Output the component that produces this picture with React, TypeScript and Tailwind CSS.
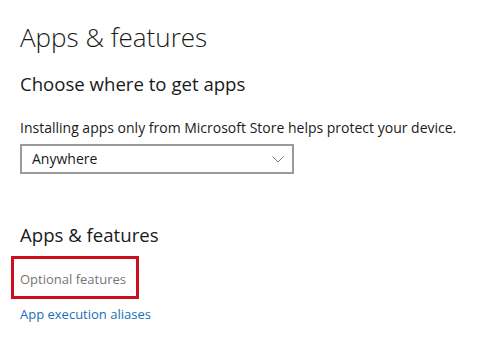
import { useState } from "react";

export default function App() {
  const [choice] = useState("Anywhere");

  return (
    <div className="w-[500px] h-[344px] bg-white pl-[20px] pt-[21px] text-[#1a1a1a] font-['Open_Sans',sans-serif] overflow-hidden">
      <h1 className="text-[26px] leading-[32px] font-light">Apps &amp; features</h1>

      <h2 className="mt-[17px] text-[18.6px] leading-[28px] font-normal">Choose where to get apps</h2>

      <p className="mt-[20px] text-[14px] leading-[20px]">
        Installing apps only from Microsoft Store helps protect your device.
      </p>

      <div className="mt-[6px] w-[274px] h-[30px] border-2 border-[#9a9a9a] flex items-center justify-between pl-[10px] pr-[8px]">
        <span className="text-[14px] leading-[20px]">{choice}</span>
        <svg width="12" height="7" viewBox="0 0 12 7" fill="none">
          <polyline points="0.5,0.5 6,6 11.5,0.5" stroke="#7a7a7a" strokeWidth="1" />
        </svg>
      </div>

      <h2 className="mt-[47px] text-[18.6px] leading-[28px] font-normal">Apps &amp; features</h2>

      {/* highlighted entry */}
      <div className="mt-[7px] -ml-[9px] w-[128px] border-[3px] border-[#c8101e] pl-[6px] pt-[7px] pb-[6px]">
        <span className="text-[13px] leading-[20px] text-[#767676]">Optional features</span>
      </div>

      <a href="#" className="block mt-[5px] text-[13px] leading-[20px] text-[#1a6fb5]">
        App execution aliases
      </a>
    </div>
  );
}
